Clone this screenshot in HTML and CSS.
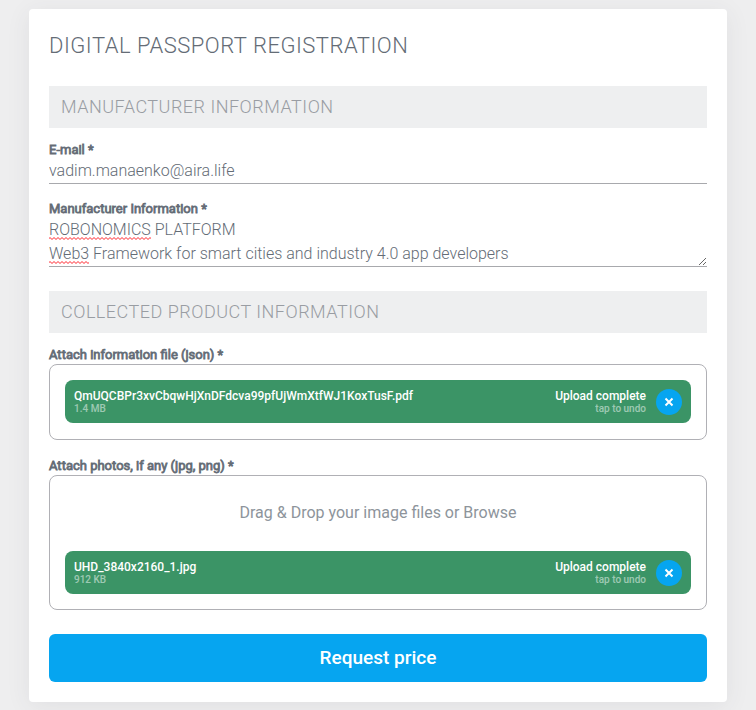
FILE: index.html
```html
<!DOCTYPE html>
<html lang="en">
<head>
<meta charset="utf-8">
<meta name="viewport" content="width=device-width, initial-scale=1">
<title>Digital passport registration</title>
<link rel="stylesheet" href="styles.css">
</head>
<body>
<main class="card">
  <h1 class="title">DIGITAL PASSPORT REGISTRATION</h1>
  <form class="form">
    <section class="section">
      <h2 class="section-title">MANUFACTURER INFORMATION</h2>
      <div class="field">
        <label class="label" for="email">E-mail *</label>
        <input class="control" id="email" type="email" value="vadim.manaenko@aira.life">
      </div>
      <div class="field">
        <label class="label" for="info">Manufacturer Information *</label>
        <div class="editor">
          <textarea class="control control-area" id="info" rows="2" spellcheck="false">ROBONOMICS PLATFORM
Web3 Framework for smart cities and industry 4.0 app developers</textarea>
          <svg class="spelling" width="104" height="48" aria-hidden="true">
            <defs>
              <pattern id="wave" width="4" height="3" patternUnits="userSpaceOnUse" y="1">
                <path d="M-1 2.500 L1 .5 L3 2.500 L5 .5" fill="none" stroke="#ff1f28" stroke-width="1"/>
              </pattern>
            </defs>
            <rect x="0" y="19" width="102" height="3" fill="url(#wave)"/>
            <rect x="0" y="43" width="40" height="3" fill="url(#wave)"/>
          </svg>
        </div>
      </div>
    </section>

    <section class="section">
      <h2 class="section-title">COLLECTED PRODUCT INFORMATION</h2>
      <div class="field" role="group" aria-labelledby="json-label">
        <span class="label" id="json-label">Attach information file (json) *</span>
        <div class="drop">
          <div class="file">
            <div class="file-info">
              <span class="file-main">QmUQCBPr3xvCbqwHjXnDFdcva99pfUjWmXtfWJ1KoxTusF.pdf</span>
              <span class="file-sub">1.4 MB</span>
            </div>
            <div class="file-status">
              <span class="file-main">Upload complete</span>
              <span class="file-sub">tap to undo</span>
            </div>
            <button class="undo" type="button" aria-label="Undo">
              <svg width="26" height="26" viewBox="0 0 26 26" aria-hidden="true"><path d="M9.500 9.500l7 7M16.500 9.500l-7 7"/></svg>
            </button>
          </div>
        </div>
      </div>
      <div class="field field-photos" role="group" aria-labelledby="photos-label">
        <span class="label" id="photos-label">Attach photos, if any (jpg, png) *</span>
        <div class="drop">
          <button class="browse" type="button">Drag &amp; Drop your image files or Browse</button>
          <div class="file">
            <div class="file-info">
              <span class="file-main">UHD_3840x2160_1.jpg</span>
              <span class="file-sub">912 KB</span>
            </div>
            <div class="file-status">
              <span class="file-main">Upload complete</span>
              <span class="file-sub">tap to undo</span>
            </div>
            <button class="undo" type="button" aria-label="Undo">
              <svg width="26" height="26" viewBox="0 0 26 26" aria-hidden="true"><path d="M9.500 9.500l7 7M16.500 9.500l-7 7"/></svg>
            </button>
          </div>
        </div>
      </div>
    </section>
    <button class="submit" type="submit">Request price</button>
  </form>
</main>
</body>
</html>
```
FILE: styles.css
```css
* {
  box-sizing: border-box;
}

body {
  margin: 0;
  padding: 9px 29px 8px;
  background: #eeeeef;
  color: #646c76;
  font-family: Roboto, "Liberation Sans", sans-serif;
  font-size: 16px;
  font-weight: 300;
  line-height: 24px;
}

button,
input,
textarea {
  font: inherit;
  color: inherit;
}

.card {
  padding: 20px;
  background: #fff;
  border-radius: 4px;
  box-shadow: 0 4px 24px rgba(60, 60, 80, 0.08);
}

.title {
  margin: 0 0 23px;
  font-size: 22px;
  font-weight: 300;
  line-height: 34px;
  letter-spacing: 0.5px;
}

.section {
  margin-bottom: 24px;
}

.section-title {
  margin: 0 0 13px;
  padding: 9px 12px;
  background: #eeeff0;
  color: #999da3;
  font-size: 18px;
  font-weight: 300;
  line-height: 24px;
  letter-spacing: 0.5px;
}

.field {
  margin-bottom: 16px;
}

.field:last-child {
  margin-bottom: 0;
}

.field-photos {
  margin-top: 17px;
}

.label {
  display: block;
  font-size: 13px;
  font-weight: 400;
  line-height: 18px;
  -webkit-text-stroke: 0.06em;
}

.control {
  display: block;
  width: 100%;
  height: 25px;
  padding: 0 0 2px;
  border: 0;
  border-bottom: 1px solid #a8a9ad;
  border-radius: 0;
  background: transparent;
  outline: 0;
}

.editor {
  position: relative;
}

.control-area {
  height: 49px;
  padding: 0;
  overflow: hidden;
  resize: vertical;
}

.spelling {
  position: absolute;
  top: 0;
  left: 0;
  pointer-events: none;
}

.drop {
  min-height: 76px;
  padding: 15px;
  border: 1px solid #b0b0b5;
  border-radius: 8px;
}

.browse {
  display: block;
  width: 100%;
  margin-bottom: 16px;
  padding: 10px 0;
  border: 0;
  background: transparent;
  color: #8d949b;
  font-weight: 400;
}

.file {
  display: flex;
  align-items: center;
  padding: 9px;
  border-radius: 8px;
  background: #3b9466;
  color: #fff;
  font-weight: 500;
}

.file-info {
  flex: 1;
  min-width: 0;
}

.file-status {
  margin-right: 10px;
  text-align: right;
}

.file-main,
.file-sub {
  display: block;
}

.file-main {
  font-size: 12px;
  line-height: 15px;
}

.file-sub {
  font-size: 10px;
  line-height: 10px;
  opacity: 0.5;
}

.undo {
  width: 26px;
  height: 26px;
  margin: -1px 0;
  padding: 0;
  border: 0;
  border-radius: 50%;
  background: #06a5f0;
}

.undo svg {
  display: block;
  fill: none;
  stroke: #fff;
  stroke-width: 2;
}

.submit {
  display: block;
  width: 100%;
  padding: 12px;
  border: 0;
  border-radius: 6px;
  background: #06a5f0;
  color: #fff;
  font-size: 19px;
  font-weight: 500;
}
```
